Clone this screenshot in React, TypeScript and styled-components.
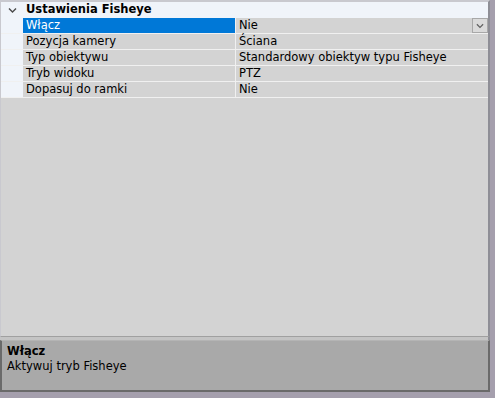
import React from 'react';
import styled, { createGlobalStyle } from 'styled-components';

const GlobalStyle = createGlobalStyle`
  *, *::before, *::after {
    box-sizing: border-box;
  }
  html, body {
    margin: 0;
    padding: 0;
    background: #a59fad;
  }
  body {
    font-family: "DejaVu Sans", Verdana, sans-serif;
    font-size: 11.5px;
    color: #000;
  }
`;

type Row = { name: string; value: string; selected?: boolean; dropdown?: boolean };

const rows: Row[] = [
  { name: 'Włącz', value: 'Nie', selected: true, dropdown: true },
  { name: 'Pozycja kamery', value: 'Ściana' },
  { name: 'Typ obiektywu', value: 'Standardowy obiektyw typu Fisheye' },
  { name: 'Tryb widoku', value: 'PTZ' },
  { name: 'Dopasuj do ramki', value: 'Nie' },
];

const ChevronDown = ({ size = 9, color = '#4a4a4a' }: { size?: number; color?: string }) => (
  <svg width={size} height={size} viewBox="0 0 9 9">
    <path d="M1 2.5 L4.5 6 L8 2.5" fill="none" stroke={color} strokeWidth="1.4" />
  </svg>
);

const App = () => {
  return (
    <>
      <GlobalStyle />
      <StyledFrame>
        <StyledGridPane>
          <StyledCategory>
            <StyledGutter>
              <ChevronDown />
            </StyledGutter>
            <StyledCategoryLabel>Ustawienia Fisheye</StyledCategoryLabel>
          </StyledCategory>
          {rows.map((row) => (
            <StyledRow key={row.name}>
              <StyledGutter />
              <StyledNameCell $selected={row.selected}>{row.name}</StyledNameCell>
              <StyledValueCell>
                <span>{row.value}</span>
                {row.dropdown && (
                  <StyledDropButton>
                    <ChevronDown size={8} color="#606060" />
                  </StyledDropButton>
                )}
              </StyledValueCell>
            </StyledRow>
          ))}
        </StyledGridPane>
        <StyledSplitter />
        <StyledDescription>
          <StyledDescTitle>Włącz</StyledDescTitle>
          <StyledDescText>Aktywuj tryb Fisheye</StyledDescText>
        </StyledDescription>
      </StyledFrame>
    </>
  );
};

export default App;

const StyledFrame = styled.div`
  width: 490px;
  height: 392px;
  display: flex;
  flex-direction: column;
  background: #d3d3d3;
`;

const StyledGridPane = styled.div`
  flex: 1;
  display: flex;
  flex-direction: column;
  background: #d3d3d3;
  border-top: 2px solid #c9c9cf;
  border-left: 1px solid #c9c9cf;
  border-right: 2px solid #8e8e96;
  border-bottom: 1px solid #a0a0a0;
  min-height: 0;
`;

const StyledCategory = styled.div`
  display: flex;
  height: 16px;
  background: #f0f4fa;
`;

const StyledGutter = styled.div`
  width: 22px;
  flex: none;
  background: #f0f4fa;
  display: flex;
  align-items: center;
  justify-content: center;
`;

const StyledCategoryLabel = styled.div`
  font-weight: bold;
  line-height: 15px;
  padding-left: 3px;
`;

const StyledRow = styled.div`
  display: flex;
  height: 16px;
  border-bottom: 1px solid #f0f0f0;
`;

const StyledNameCell = styled.div<{ $selected?: boolean }>`
  width: 213px;
  flex: none;
  padding-left: 3px;
  line-height: 15px;
  white-space: nowrap;
  overflow: hidden;
  border-right: 1px solid #f0f0f0;
  background: ${({ $selected }) => ($selected ? '#0078d7' : '#d3d3d3')};
  color: ${({ $selected }) => ($selected ? '#ffffff' : '#000000')};
`;

const StyledValueCell = styled.div`
  flex: 1;
  display: flex;
  align-items: center;
  justify-content: space-between;
  padding-left: 3px;
  line-height: 15px;
  white-space: nowrap;
`;

const StyledDropButton = styled.div`
  width: 16px;
  height: 15px;
  margin-right: 0;
  border: 1px solid #a8a8a8;
  background: #dadada;
  display: flex;
  align-items: center;
  justify-content: center;
`;

const StyledSplitter = styled.div`
  height: 3px;
  flex: none;
  background: #c4c4c4;
  border-right: 2px solid #8e8e96;
`;

const StyledDescription = styled.div`
  height: 52px;
  flex: none;
  background: #a9a9a9;
  border-style: solid;
  border-color: #b4b4b4 #6a6a6a #6a6a6a #6a6a6a;
  border-width: 1px 2px 2px 2px;
  padding: 3px 5px 0;
  display: flex;
  flex-direction: column;
`;

const StyledDescTitle = styled.div`
  font-weight: bold;
  line-height: 15px;
`;

const StyledDescText = styled.div`
  line-height: 15px;
`;
